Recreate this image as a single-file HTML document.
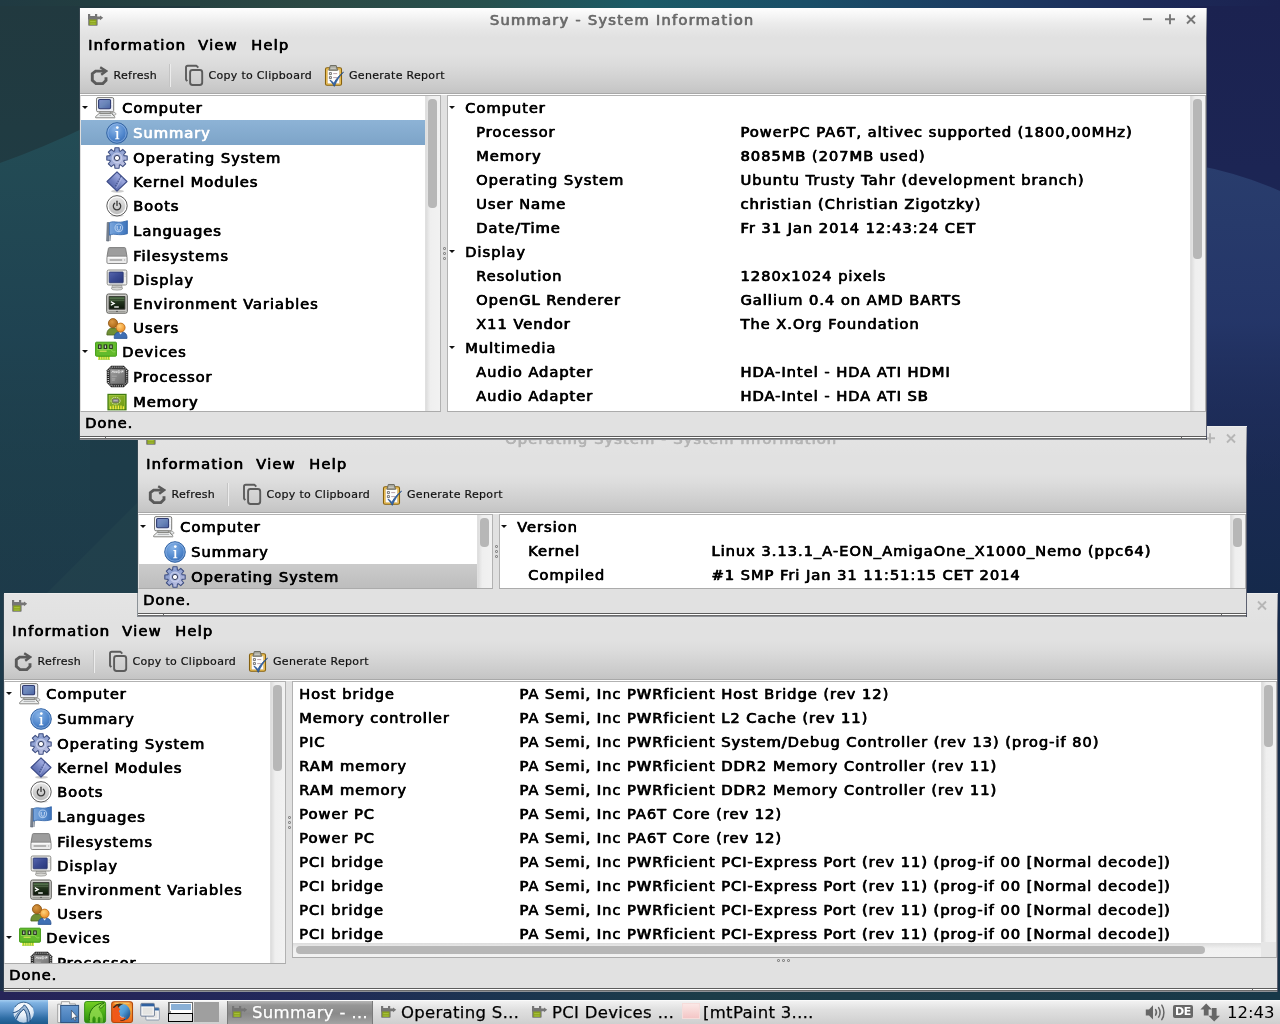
<!DOCTYPE html><html><head><meta charset="utf-8"><title>System Information</title><style>
*{box-sizing:border-box;margin:0;padding:0}
html,body{width:1280px;height:1024px;overflow:hidden}
body{position:relative;font-family:'DejaVu Sans','Liberation Sans',sans-serif;font-size:14.67px;color:#000;background:#1d3448;-webkit-font-smoothing:antialiased}
.abs{position:absolute}
#wall{position:absolute;left:0;top:0;width:1280px;height:1024px}
.win{position:absolute;background:#e1e1e1;overflow:hidden;will-change:transform;border-radius:.01px;box-shadow:-1px 0 0 rgba(70,80,90,.55)}
.inactive{box-shadow:0 -1px 0 #ececec,-1px 0 0 rgba(70,80,90,.55)}
.chrome{position:absolute;left:0;top:0;right:0;height:85px;background:linear-gradient(#fefefe 0px,#f6f6f6 7px,#ececec 15px,#e5e5e5 23px,#e1e1e1 30px,#e1e1e1 46px,#dcdcdc 56px,#d3d3d3 68px,#cacaca 79px,#c4c4c4 85px)}
.inactive .chrome{background:linear-gradient(#e4e4e4 0px,#e2e2e2 23px,#e1e1e1 30px,#e1e1e1 46px,#dcdcdc 56px,#d3d3d3 68px,#cacaca 79px,#c4c4c4 85px)}
.tline{position:absolute;left:0;right:0;top:85px;height:1px;background:#a8a8a8}
.wline{position:absolute;left:0;right:0;top:86px;height:1px;background:#fff}
.b{letter-spacing:.97px;text-shadow:.6px 0 0 currentColor;-webkit-text-stroke:.42px currentColor;white-space:pre}
.title{position:absolute;left:27px;right:70px;top:0px;height:23px;line-height:23px;text-align:center;color:#6c6c6c;font-size:14.67px;letter-spacing:1.25px!important}
.inactive .title{color:#b4b4b4}
.menu{position:absolute;top:27px;height:20px;line-height:20px;font-size:14.67px;letter-spacing:1.2px!important}
.tb{position:absolute;top:59px;height:18px;line-height:18px;font-size:11px;letter-spacing:.3px;color:#111;white-space:pre;-webkit-text-stroke:.2px #111}
.pane{position:absolute;background:#fff;border:1px solid #b2b2b2;border-bottom-color:#ababab;overflow:hidden}
.row{position:absolute;left:0;height:24px;line-height:24px;font-size:14.67px}
.sel{position:absolute;left:0;background:linear-gradient(#8db3d6,#7da4c8)}
.selg{position:absolute;left:0;background:linear-gradient(#cbcbcb,#bdbdbd)}
.sbv{position:absolute;top:0;bottom:0;width:15px;background:linear-gradient(90deg,#dcdcdc,#efefef 30%,#f2f2f2);border-left:1px solid #e0e0e0}
.thumb{position:absolute;background:#b7b7b7;border-radius:4px}
.status{position:absolute;left:0;right:0;height:22px;line-height:22px;font-size:14.67px}
.bb{position:absolute;left:0;right:0;bottom:0;height:4px;background:linear-gradient(#5c5c5c 0,#5c5c5c 1px,#fff 1px,#fff 2px,#6a6a6a 2px,#6a6a6a 3px,#8d9096 3px,#8d9096 4px)}
.dot{position:absolute;width:2px;height:2px;border:1px solid #8a8a8a;border-radius:1px;box-sizing:content-box;width:1px;height:1px}
svg{position:absolute;overflow:visible}
.arrow{position:absolute;width:0;height:0;border-left:3px solid transparent;border-right:3px solid transparent;border-top:3.5px solid #111}
#panel{position:absolute;left:0;top:1000px;width:1280px;height:24px;will-change:transform;border-radius:.01px;overflow:hidden;background:linear-gradient(#f4f4f4,#e0e0e0 40%,#cfcfcf)}
.task{position:absolute;top:1px;height:24px;line-height:24px;font-size:16.5px;letter-spacing:.3px;white-space:pre;color:#000;-webkit-text-stroke:.25px currentColor}
</style></head><body>
<svg id="wall" viewBox="0 0 1280 1024" preserveAspectRatio="none">
<defs>
<linearGradient id="wt" x1="0" y1="0" x2="1" y2="0"><stop offset="0" stop-color="#203a42"/><stop offset=".07" stop-color="#223d40"/><stop offset=".24" stop-color="#2c4944"/><stop offset=".38" stop-color="#27504e"/><stop offset=".5" stop-color="#1b5a66"/><stop offset=".63" stop-color="#1a4f68"/><stop offset=".78" stop-color="#1c3a62"/><stop offset=".9" stop-color="#1c2a58"/><stop offset="1" stop-color="#1b2250"/></linearGradient>
<linearGradient id="wl" x1="0" y1="0" x2="0" y2="1"><stop offset="0" stop-color="#21393f"/><stop offset=".12" stop-color="#203b42"/><stop offset=".45" stop-color="#1d3c49"/><stop offset=".6" stop-color="#1d3a4a"/><stop offset=".9" stop-color="#1c364a"/><stop offset=".97" stop-color="#1d3049"/><stop offset="1" stop-color="#252458"/></linearGradient>
<linearGradient id="wl2" x1="0" y1="0" x2="0" y2="1"><stop offset="0" stop-color="#234c55"/><stop offset=".45" stop-color="#1f4352" stop-opacity=".95"/><stop offset="1" stop-color="#1d3e4a" stop-opacity="0"/></linearGradient>
<linearGradient id="wr" x1="0" y1="0" x2="0" y2="1"><stop offset="0" stop-color="#1b2250"/><stop offset=".16" stop-color="#1c2554"/><stop offset=".42" stop-color="#1b2a54"/><stop offset=".6" stop-color="#14294a"/><stop offset="1" stop-color="#183448"/></linearGradient>
<linearGradient id="wr2" x1="0" y1="0" x2="0" y2="1"><stop offset="0" stop-color="#293d6d"/><stop offset=".5" stop-color="#25376a" stop-opacity=".9"/><stop offset="1" stop-color="#1e2d5a" stop-opacity="0"/></linearGradient>
<linearGradient id="wb" x1="0" y1="0" x2="1" y2="0"><stop offset="0" stop-color="#262458"/><stop offset=".22" stop-color="#22285a"/><stop offset=".38" stop-color="#1c3450"/><stop offset=".55" stop-color="#1c3c48"/><stop offset="1" stop-color="#183848"/></linearGradient>
</defs>
<rect width="1280" height="1024" fill="url(#wt)"/>
<rect x="0" y="6" width="200" height="1018" fill="url(#wl)"/>
<path d="M0 163Q45 147 90 125V600H0z" fill="url(#wl2)"/>
<path d="M40 600L140 500V600z" fill="#2c4a50" opacity=".35"/>
<rect x="1190" y="6" width="90" height="1018" fill="url(#wr)"/>
<path d="M1190 164Q1240 173 1280 191V480H1190z" fill="url(#wr2)"/>
<rect x="0" y="991" width="1280" height="33" fill="url(#wb)"/>
</svg>
<svg width="0" height="0" style="position:absolute;left:-10px;top:-10px"><defs><symbol id="i-app" viewBox="0 0 16 13"><path d="M0 0h2.200v2h4.800V0h2.200v2.400h2.800V1.400L15.200 3.800 12 6.200V5.200H9.600v5.600c0 .6-.4 1-1 1H1.200c-.6 0-1-.4-1-1V5.400H0z" fill="#757575"/>
<path d="M1.300 5.400h7.200v5.200c0 .3-.2.500-.5.500H1.800c-.3 0-.5-.2-.5-.5z" fill="#8aa31c"/>
<path d="M2.200 7h5.400v1.200H2.200z" fill="#a6bf3a"/><path d="M2.200 9.400h5.400v1.100H2.200z" fill="#a3bd44"/></symbol><symbol id="i-refresh" viewBox="0 0 18 19"><path d="M16 11.300V14.500L12.800 17.600H6L2.300 14.400V7.700L5.600 5.100H14.600" fill="none" stroke="#5a5a5a" stroke-width="2.900" stroke-linejoin="miter"/>
<path d="M10.200 1.300L16.200 5 11.200 8.800" fill="none" stroke="#5a5a5a" stroke-width="2.400" stroke-linejoin="miter"/></symbol><symbol id="i-copy" viewBox="0 0 19 22"><path d="M2.300 17.200L1 15.600V3.400Q1 1.700 2.700 1.700H11.300L13.300 3.700" fill="none" stroke="#5c5c5c" stroke-width="1.900" stroke-linejoin="round"/>
<rect x="5.100" y="6" width="12.100" height="15" rx="2.400" fill="none" stroke="#5c5c5c" stroke-width="1.900"/></symbol><symbol id="i-report" viewBox="0 0 21 23"><rect x="2.500" y="3.700" width="16" height="17.500" rx="1.500" fill="#eec257" stroke="#85600f" stroke-width="1.100"/>
<rect x="4.300" y="5.900" width="12.400" height="13.900" fill="#fdfdfd" stroke="#c9a04a" stroke-width=".5"/>
<path d="M5.900 6.300L7.300 1.500h5.900l1.400 4.800z" fill="#a5a59b" stroke="#66665c" stroke-width=".9" stroke-linejoin="round"/>
<path d="M7.600 4.200h5.200" stroke="#d6d6cf" stroke-width="1"/>
<path d="M6.400 8.600h2v2h-2zM6.400 12.600h2v2h-2z" fill="#fff" stroke="#666" stroke-width=".9"/>
<path d="M10.200 9.600h4M10.200 13.600h4" stroke="#b9a0a8" stroke-width="1"/>
<path d="M6.900 16.200c1.400.5 2.700 1.400 3.900 3.100C13.200 14.800 16.500 11 20.600 8c-3.900 4-6.900 8.600-9.300 14.400-1.200-2.400-2.700-4.300-4.400-6.200z" fill="#3b6db0" stroke="#204a87" stroke-width=".7" stroke-linejoin="round"/></symbol><symbol id="i-computer" viewBox="0 0 22 22"><defs><linearGradient id="gsc" x1="0" y1="0" x2="1" y2="1"><stop offset="0" stop-color="#8090cc"/><stop offset=".5" stop-color="#6a86b8"/><stop offset="1" stop-color="#4a62a4"/></linearGradient></defs>
<path d="M16.600 15.200c1.800-.6 3.600 0 4.200 1.400.4 1-.6 1.600-2.400 1.800z" fill="#e4e6e8" stroke="#8a8a86" stroke-width=".8"/>
<rect x="1.500" y=".6" width="17.200" height="14.200" rx="1.500" fill="#eef0f6" stroke="#7b7b77" stroke-width="1"/>
<rect x="3.600" y="2.500" width="12" height="9.200" rx="1.200" fill="url(#gsc)" stroke="#2f3b72" stroke-width="1.100"/>
<path d="M16.600 4.400h1.300M16.600 5.900h1.300M16.600 7.400h1.300" stroke="#fff" stroke-width=".8"/>
<path d="M4.800 14.800h10.600v1.600H4.800z" fill="#dfe1e4" stroke="#7b7b77" stroke-width=".8"/>
<path d="M4.200 16.400h12.200l3.400 3.300c.5.500.2 1.100-.5 1.100H1c-.7 0-1-.6-.5-1.100z" fill="#eceeee" stroke="#7b7b77" stroke-width=".9" stroke-linejoin="round"/>
<path d="M5 17.700h10.600l.8 1.300H4.200z" fill="#b4b6b8"/></symbol><symbol id="i-info" viewBox="0 0 22 22"><defs><radialGradient id="gin" cx=".4" cy=".3" r=".8"><stop offset="0" stop-color="#86b2e6"/><stop offset=".6" stop-color="#4f86cc"/><stop offset="1" stop-color="#3366ad"/></radialGradient></defs>
<circle cx="11" cy="11" r="10.300" fill="url(#gin)" stroke="#3465a4" stroke-width="1"/>
<circle cx="11" cy="11" r="9.200" fill="none" stroke="#a9c8ee" stroke-width=".8" opacity=".7"/>
<circle cx="11.300" cy="5.600" r="1.350" fill="#fff"/>
<path d="M9.300 9h2.900v7.300l1.200.3v.7H9.100v-.7l1.300-.3v-6.300l-1.100-.3z" fill="#fff"/></symbol><symbol id="i-gear" viewBox="0 0 22 22"><defs><linearGradient id="gge" x1="0" y1="0" x2=".6" y2="1"><stop offset="0" stop-color="#b9c6e6"/><stop offset=".35" stop-color="#8a9ed0"/><stop offset=".7" stop-color="#a3aed8"/><stop offset="1" stop-color="#c3c6e4"/></linearGradient></defs>
<path d="M8.60 4.00 L8.93 0.81 L13.07 0.81 L13.40 4.00 L14.25 4.35 L16.75 2.33 L19.67 5.25 L17.65 7.75 L18.00 8.60 L21.19 8.93 L21.19 13.07 L18.00 13.40 L17.65 14.25 L19.67 16.75 L16.75 19.67 L14.25 17.65 L13.40 18.00 L13.07 21.19 L8.93 21.19 L8.60 18.00 L7.75 17.65 L5.25 19.67 L2.33 16.75 L4.35 14.25 L4.00 13.40 L0.81 13.07 L0.81 8.93 L4.00 8.60 L4.35 7.75 L2.33 5.25 L5.25 2.33 L7.75 4.35Z" fill="url(#gge)" stroke="#3f4f82" stroke-width="1.100" stroke-linejoin="round"/>
<circle cx="11" cy="11" r="4.600" fill="none" stroke="#ccd2ec" stroke-width="1.600" opacity=".8"/>
<circle cx="11" cy="11" r="2.600" fill="#fff" stroke="#39425f" stroke-width="1"/></symbol><symbol id="i-module" viewBox="0 0 22 22"><defs><linearGradient id="gmo" x1="1" y1="0" x2="0" y2="1"><stop offset="0" stop-color="#7a88c4"/><stop offset=".35" stop-color="#9aa6dc"/><stop offset=".6" stop-color="#6c7cbc"/><stop offset="1" stop-color="#44549a"/></linearGradient></defs>
<ellipse cx="11.500" cy="20.200" rx="6.500" ry="1.500" fill="#000" opacity=".2"/>
<path d="M11 .8L21 10.500 11 20.200 1 10.500z" fill="url(#gmo)" stroke="#3b4a86" stroke-width="1.100" stroke-linejoin="round"/>
<path d="M14.800 5.200l-5.600 10.600" stroke="#39467e" stroke-width="1.200" stroke-dasharray="1.400 1.100" opacity=".85"/>
<path d="M16 6.400l-5.600 10.600" stroke="#c9d0f0" stroke-width=".8" opacity=".6"/></symbol><symbol id="i-power" viewBox="0 0 22 22"><defs><linearGradient id="gpw" x1="0" y1="0" x2="0" y2="1"><stop offset="0" stop-color="#e4e4e4"/><stop offset="1" stop-color="#bdbdbd"/></linearGradient></defs>
<ellipse cx="11" cy="20.600" rx="7" ry="1.300" fill="#000" opacity=".12"/>
<circle cx="11" cy="10.800" r="10.200" fill="#fbfbfb" stroke="#5c5c5c" stroke-width="1"/>
<circle cx="11" cy="10.800" r="8.400" fill="url(#gpw)"/>
<path d="M8.700 8.300a3.700 3.700 0 1 0 4.600 0" fill="none" stroke="#3a3a3a" stroke-width="1.300" stroke-linecap="round"/>
<path d="M11 6.200v4.200" stroke="#3a3a3a" stroke-width="1.300" stroke-linecap="round"/></symbol><symbol id="i-flag" viewBox="0 0 22 22"><defs><linearGradient id="gfl" x1="0" y1="0" x2="1" y2="0"><stop offset="0" stop-color="#7ba6dc"/><stop offset=".5" stop-color="#5a8fd0"/><stop offset="1" stop-color="#3d73ba"/></linearGradient></defs>
<path d="M1.200 2.500h1.900V21H.6z" fill="#7d8794" stroke="#59626e" stroke-width=".6"/>
<path d="M3.800 14.500h1.400L4.600 21H3.800z" fill="#8c96a2"/>
<path d="M3.400 2.600c3-1.400 5.600-.6 8.800-.4 3.100.2 6.300-.6 9.200-1.500v13c-3 .8-6.100 1.200-9.200.9-3.100-.3-5.800-.9-8.800.6z" fill="url(#gfl)" stroke="#2f62a6" stroke-width=".8"/>
<circle cx="12.800" cy="7.800" r="3.800" fill="none" stroke="#b7d1f2" stroke-width="1.200" opacity=".85"/>
<path d="M11.200 6v2.600c0 1 .7 1.600 1.600 1.600s1.600-.6 1.600-1.600V6" fill="none" stroke="#cfe0f7" stroke-width="1" opacity=".9"/></symbol><symbol id="i-drive" viewBox="0 1 22 22"><path d="M3.600 3.600h14.800c.7 0 1.100.3 1.200.9l1.400 8.100H1l1.400-8.100c.1-.6.500-.9 1.200-.9z" fill="#9d9d9d" stroke="#777" stroke-width=".9" stroke-linejoin="round"/>
<rect x=".9" y="12.200" width="20.200" height="7.300" rx="1.300" fill="#ececec" stroke="#808080" stroke-width=".9"/>
<path d="M2 13.300h18" stroke="#fff" stroke-width=".9"/>
<rect x="3.600" y="15.400" width="12.600" height="1.200" fill="#8c8c8c"/>
<circle cx="18.600" cy="16" r=".8" fill="#b5b5b5"/></symbol><symbol id="i-display" viewBox="0 0 22 22"><defs><linearGradient id="gds" x1="0" y1="0" x2="1" y2="1"><stop offset="0" stop-color="#5666ae"/><stop offset=".5" stop-color="#3a4a92"/><stop offset="1" stop-color="#29377a"/></linearGradient></defs>
<path d="M6.500 16h9l.8 3.200H5.700z" fill="#cfcfcc" stroke="#8e8e8a" stroke-width=".7"/>
<ellipse cx="11" cy="19.600" rx="5.600" ry="1.500" fill="#d9d9d6" stroke="#8e8e8a" stroke-width=".7"/>
<rect x="1.200" y="1" width="19.600" height="15" rx="1.400" fill="#eeeeec" stroke="#8a8a86" stroke-width="1"/>
<rect x="3.200" y="3" width="14" height="10.800" rx=".6" fill="url(#gds)" stroke="#27336a" stroke-width=".8"/>
<path d="M18.600 4.200h1M18.600 5.800h1M18.600 7.400h1" stroke="#aaa" stroke-width=".7"/></symbol><symbol id="i-term" viewBox="0 0 22 22"><defs><linearGradient id="gtm" x1="0" y1="0" x2="0" y2="1"><stop offset="0" stop-color="#4a6a44"/><stop offset=".35" stop-color="#25391f"/><stop offset="1" stop-color="#0c160a"/></linearGradient></defs>
<rect x=".7" y="1" width="20.600" height="19.200" rx="1.800" fill="#cfcfcb" stroke="#5d5d59" stroke-width="1"/>
<rect x="2.600" y="2.900" width="16.800" height="13.800" rx=".8" fill="#3c3c38"/>
<rect x="3.600" y="3.900" width="14.800" height="11.800" fill="url(#gtm)"/>
<path d="M3.600 5.600h14.800M3.600 7.600h14.800" stroke="#7f9a74" stroke-width=".7" opacity=".55"/>
<path d="M4.800 8.600l3.400 1.800-3.400 1.800" fill="none" stroke="#fff" stroke-width="1.200"/>
<path d="M8.200 14h4.600" stroke="#fff" stroke-width="1.300"/>
<path d="M2.400 18.400h17.200" stroke="#8e8e8a" stroke-width=".9"/>
<path d="M10 18.400h2" stroke="#555" stroke-width=".9"/></symbol><symbol id="i-users" viewBox="0 0 22 22"><defs><radialGradient id="gu1" cx=".4" cy=".35" r=".7"><stop offset="0" stop-color="#dc9a44"/><stop offset="1" stop-color="#a86414"/></radialGradient>
<radialGradient id="gu2" cx=".4" cy=".35" r=".7"><stop offset="0" stop-color="#ffd27a"/><stop offset="1" stop-color="#ec8a22"/></radialGradient></defs>
<path d="M.9 17.200c0-3.600 2-6.200 6.200-6.200s6.200 2.600 6.200 6.200v.8H.9z" fill="#6f8f34" stroke="#4a6620" stroke-width=".8"/>
<circle cx="7" cy="6.200" r="4.600" fill="url(#gu1)" stroke="#8a5210" stroke-width=".8"/>
<path d="M8.200 20.800c0-3.800 2-6 6.400-6s6.400 2.200 6.400 6v.6H8.200z" fill="#3f6fb4" stroke="#27508e" stroke-width=".8"/>
<path d="M12.800 15.200l1.800 2.200 1.800-2.200z" fill="#eef2fa"/>
<circle cx="14.600" cy="10.600" r="4.500" fill="url(#gu2)" stroke="#b8660e" stroke-width=".8"/></symbol><symbol id="i-devices" viewBox="0 1.2 22 22"><path d="M3 16h12v4H3z" fill="#7fc431"/>
<path d="M3.600 16.400v3.400M5.400 16.400v3.400M7.200 16.400v3.400M9 16.400v3.400M10.800 16.400v3.400M12.600 16.400v3.400M14.400 16.400v3.400" stroke="#f4ee5a" stroke-width="1"/>
<rect x=".6" y="2.400" width="20.800" height="14" rx=".8" fill="#63bb2c" stroke="#3f9a14" stroke-width="1"/>
<path d="M2 9.600h13.600l2.600 2.400h2.200" fill="none" stroke="#9bdc5e" stroke-width=".8"/>
<rect x="3" y="4.600" width="3.600" height="4.600" fill="#2c3a24"/><rect x="8.600" y="4.600" width="3.600" height="4.600" fill="#2c3a24"/><rect x="14.200" y="4.600" width="3.600" height="4.600" fill="#2c3a24"/>
<rect x="4.200" y="5.600" width="1.200" height="2.600" fill="#c9d2c2"/><rect x="9.800" y="5.600" width="1.200" height="2.600" fill="#c9d2c2"/><rect x="15.400" y="5.600" width="1.200" height="2.600" fill="#c9d2c2"/>
<path d="M4.600 11.400h7" stroke="#d8e25a" stroke-width="1.200"/></symbol><symbol id="i-cpu" viewBox="0 0 23 23"><path d="M5.200 .8h12.600l4.400 4.400v12.600l-4.400 4.400H5.200L.8 17.800V5.200z" fill="#1e1e1e"/><path d="M5.800 2.200h11.400l3.600 3.600v11.400l-3.600 3.600H5.800l-3.600-3.600V5.800z" fill="none" stroke="#e8e8e8" stroke-width="1.300" stroke-dasharray=".9 1.050"/><defs><linearGradient id="gcp" x1="0" y1="0" x2="1" y2="1"><stop offset="0" stop-color="#a2a2a2"/><stop offset=".5" stop-color="#858585"/><stop offset="1" stop-color="#6a6a6a"/></linearGradient></defs><rect x="3.800" y="3.800" width="15.400" height="15.400" rx=".8" fill="url(#gcp)" stroke="#444" stroke-width=".8"/><path d="M5.600 7.800l1.400-2 1 2M8.800 5.800v2l1-1.200 1 1.200v-2M12 5.800h1.200c.7 0 1 .4 1 1s-.3 1-1 1H12z" fill="none" stroke="#e6e6e6" stroke-width=".8"/><path d="M15.400 5.600h2v2l-.8-.6-1.200 1.200z" fill="#e6e6e6"/><path d="M5.800 11.200h5M5.800 13.800h3.600M5.800 15.200h3" stroke="#b4b4b4" stroke-width=".7"/></symbol><symbol id="i-mem" viewBox="0 0 22 22"><defs><linearGradient id="gme" x1="0" y1="0" x2="1" y2="1"><stop offset="0" stop-color="#92bb2c"/><stop offset="1" stop-color="#6c9716"/></linearGradient></defs>
<rect x="2" y="3.400" width="18" height="15.400" fill="url(#gme)" stroke="#3f7a10" stroke-width="1.200"/>
<rect x="3.200" y="4.600" width="15.600" height="13" fill="none" stroke="#b4d65a" stroke-width=".6" opacity=".7"/>
<path d="M4.600 18.200v-3M7.200 18.200v-3.600M9.800 18.200v-3.600M12.400 18.200v-3.600M15 18.200v-3.600M17.400 18.200v-3" stroke="#f4ec3c" stroke-width="1.300"/>
<ellipse cx="9.600" cy="9.800" rx="4.600" ry="3.400" fill="none" stroke="#f2f2e6" stroke-width="1" stroke-dasharray=".9 .9"/>
<rect x="6.600" y="8" width="6" height="3.600" rx=".8" fill="#8f8f8f" stroke="#5f5f5f" stroke-width=".6"/>
<path d="M7.600 9.400h4" stroke="#c9c9c9" stroke-width=".7"/></symbol></defs></svg>
<div class="win inactive" style="left:4px;top:594px;width:1274px;height:398px">
<div class="chrome"></div><div class="tline"></div><div class="wline"></div>
<svg style="left:8px;top:6px" width="16" height="13"><use href="#i-app"/></svg>
<div class="title b">PCI Devices - System Information</div>
<svg style="left:0;top:0" width="1274" height="24"><path d="M1254 7.5l8 8m0-8l-8 8" stroke="#b6b6b6" stroke-width="1.9" fill="none"/></svg>
<div class="menu b" style="left:8px">Information</div>
<div class="menu b" style="left:118px">View</div>
<div class="menu b" style="left:171px">Help</div>
<svg style="left:10px;top:58px" width="18" height="19"><use href="#i-refresh"/></svg>
<div class="tb" style="left:33.5px">Refresh</div>
<div class="abs" style="left:90px;top:56px;width:1px;height:23px;background:#ececec"></div>
<div class="abs" style="left:89px;top:56px;width:1px;height:23px;background:#c4c4c4"></div>
<svg style="left:105px;top:56px" width="19" height="22"><use href="#i-copy"/></svg>
<div class="tb" style="left:128.5px">Copy to Clipboard</div>
<svg style="left:243px;top:56px" width="21" height="23"><use href="#i-report"/></svg>
<div class="tb" style="left:269px">Generate Report</div>
<div class="pane" style="left:0;top:87px;width:282px;height:283px;border-left-color:#dedede">
<div class="arrow" style="left:0.5px;top:10px"></div>
<svg style="left:14px;top:1px" width="22" height="22"><use href="#i-computer"/></svg>
<div class="row b " style="left:41px;top:0px;height:24px;line-height:24px;">Computer</div>
<svg style="left:25px;top:25.5px" width="22" height="22"><use href="#i-info"/></svg>
<div class="row b " style="left:52px;top:24px;height:25px;line-height:25px;">Summary</div>
<svg style="left:25px;top:50.5px" width="22" height="22"><use href="#i-gear"/></svg>
<div class="row b " style="left:52px;top:49px;height:25px;line-height:25px;">Operating System</div>
<svg style="left:25px;top:75px" width="22" height="22"><use href="#i-module"/></svg>
<div class="row b " style="left:52px;top:74px;height:24px;line-height:24px;">Kernel Modules</div>
<svg style="left:25px;top:99px" width="22" height="22"><use href="#i-power"/></svg>
<div class="row b " style="left:52px;top:98px;height:24px;line-height:24px;">Boots</div>
<svg style="left:25px;top:123.5px" width="22" height="22"><use href="#i-flag"/></svg>
<div class="row b " style="left:52px;top:122px;height:25px;line-height:25px;">Languages</div>
<svg style="left:25px;top:148.5px" width="22" height="22"><use href="#i-drive"/></svg>
<div class="row b " style="left:52px;top:147px;height:25px;line-height:25px;">Filesystems</div>
<svg style="left:25px;top:173px" width="22" height="22"><use href="#i-display"/></svg>
<div class="row b " style="left:52px;top:172px;height:24px;line-height:24px;">Display</div>
<svg style="left:25px;top:197px" width="22" height="22"><use href="#i-term"/></svg>
<div class="row b " style="left:52px;top:196px;height:24px;line-height:24px;">Environment Variables</div>
<svg style="left:25px;top:221px" width="22" height="22"><use href="#i-users"/></svg>
<div class="row b " style="left:52px;top:220px;height:24px;line-height:24px;">Users</div>
<div class="arrow" style="left:0.5px;top:254px"></div>
<svg style="left:14px;top:245px" width="22" height="22"><use href="#i-devices"/></svg>
<div class="row b " style="left:41px;top:244px;height:24px;line-height:24px;">Devices</div>
<svg style="left:24.5px;top:269px" width="23" height="23"><use href="#i-cpu"/></svg>
<div class="row b " style="left:52px;top:268px;height:25px;line-height:25px;">Processor</div>
<div class="sbv" style="right:0"><div class="thumb" style="left:2.4px;width:8.4px;top:3px;height:86px"></div></div>
</div>
<div class="dot" style="left:284px;top:222px"></div>
<div class="dot" style="left:284px;top:227px"></div>
<div class="dot" style="left:284px;top:232px"></div>
<div class="pane" style="left:288px;top:87px;width:985px;height:277px">
<div class="row b " style="left:6px;top:0px;height:24px;line-height:24px;">Host bridge</div>
<div class="row b " style="left:226.3px;top:0px;height:24px;line-height:24px;">PA Semi, Inc PWRficient Host Bridge (rev 12)</div>
<div class="row b " style="left:6px;top:24px;height:24px;line-height:24px;">Memory controller</div>
<div class="row b " style="left:226.3px;top:24px;height:24px;line-height:24px;">PA Semi, Inc PWRficient L2 Cache (rev 11)</div>
<div class="row b " style="left:6px;top:48px;height:24px;line-height:24px;">PIC</div>
<div class="row b " style="left:226.3px;top:48px;height:24px;line-height:24px;">PA Semi, Inc PWRficient System/Debug Controller (rev 13) (prog-if 80)</div>
<div class="row b " style="left:6px;top:72px;height:24px;line-height:24px;">RAM memory</div>
<div class="row b " style="left:226.3px;top:72px;height:24px;line-height:24px;">PA Semi, Inc PWRficient DDR2 Memory Controller (rev 11)</div>
<div class="row b " style="left:6px;top:96px;height:24px;line-height:24px;">RAM memory</div>
<div class="row b " style="left:226.3px;top:96px;height:24px;line-height:24px;">PA Semi, Inc PWRficient DDR2 Memory Controller (rev 11)</div>
<div class="row b " style="left:6px;top:120px;height:24px;line-height:24px;">Power PC</div>
<div class="row b " style="left:226.3px;top:120px;height:24px;line-height:24px;">PA Semi, Inc PA6T Core (rev 12)</div>
<div class="row b " style="left:6px;top:144px;height:24px;line-height:24px;">Power PC</div>
<div class="row b " style="left:226.3px;top:144px;height:24px;line-height:24px;">PA Semi, Inc PA6T Core (rev 12)</div>
<div class="row b " style="left:6px;top:168px;height:24px;line-height:24px;">PCI bridge</div>
<div class="row b " style="left:226.3px;top:168px;height:24px;line-height:24px;">PA Semi, Inc PWRficient PCI-Express Port (rev 11) (prog-if 00 [Normal decode])</div>
<div class="row b " style="left:6px;top:192px;height:24px;line-height:24px;">PCI bridge</div>
<div class="row b " style="left:226.3px;top:192px;height:24px;line-height:24px;">PA Semi, Inc PWRficient PCI-Express Port (rev 11) (prog-if 00 [Normal decode])</div>
<div class="row b " style="left:6px;top:216px;height:24px;line-height:24px;">PCI bridge</div>
<div class="row b " style="left:226.3px;top:216px;height:24px;line-height:24px;">PA Semi, Inc PWRficient PCI-Express Port (rev 11) (prog-if 00 [Normal decode])</div>
<div class="row b " style="left:6px;top:240px;height:24px;line-height:24px;">PCI bridge</div>
<div class="row b " style="left:226.3px;top:240px;height:24px;line-height:24px;">PA Semi, Inc PWRficient PCI-Express Port (rev 11) (prog-if 00 [Normal decode])</div>
<div class="sbv" style="right:0;bottom:15px"><div class="thumb" style="left:2.4px;width:8.4px;top:3px;height:62px"></div></div>
<div class="abs" style="left:0;right:15px;bottom:0;height:14px;background:linear-gradient(#dcdcdc,#f0f0f0 40%,#f2f2f2)"><div class="thumb" style="left:3px;top:3px;height:8px;width:909px"></div></div>
<div class="abs" style="right:0;bottom:0;width:15px;height:15px;background:#e6e6e6"></div>
</div>
<div class="dot" style="left:773px;top:365px"></div>
<div class="dot" style="left:778px;top:365px"></div>
<div class="dot" style="left:783px;top:365px"></div>
<div class="status b" style="top:370px;padding-left:5px">Done.</div>
<div class="bb"></div>
<div class="abs" style="left:25px;bottom:1px;width:1px;height:3px;background:#666"></div>
<div class="abs" style="right:25px;bottom:1px;width:1px;height:3px;background:#666"></div>
<div class="abs" style="right:0;top:0;bottom:0;width:1px;background:linear-gradient(rgba(120,125,140,.55),rgba(60,65,85,.8) 30px)"></div>
</div>
<div class="win inactive" style="left:138px;top:427px;width:1109px;height:190px">
<div class="chrome"></div><div class="tline"></div><div class="wline"></div>
<svg style="left:8px;top:6px" width="16" height="13"><use href="#i-app"/></svg>
<div class="title b" style="letter-spacing:1.1px!important">Operating System - System Information</div>
<svg style="left:0;top:0" width="1109" height="24"><path d="M1089 7.5l8 8m0-8l-8 8" stroke="#b6b6b6" stroke-width="1.9" fill="none"/><path d="M1067 11.2h10m-5-5v10" stroke="#b6b6b6" stroke-width="1.9" fill="none"/></svg>
<div class="menu b" style="left:8px">Information</div>
<div class="menu b" style="left:118px">View</div>
<div class="menu b" style="left:171px">Help</div>
<svg style="left:10px;top:58px" width="18" height="19"><use href="#i-refresh"/></svg>
<div class="tb" style="left:33.5px">Refresh</div>
<div class="abs" style="left:90px;top:56px;width:1px;height:23px;background:#ececec"></div>
<div class="abs" style="left:89px;top:56px;width:1px;height:23px;background:#c4c4c4"></div>
<svg style="left:105px;top:56px" width="19" height="22"><use href="#i-copy"/></svg>
<div class="tb" style="left:128.5px">Copy to Clipboard</div>
<svg style="left:243px;top:56px" width="21" height="23"><use href="#i-report"/></svg>
<div class="tb" style="left:269px">Generate Report</div>
<div class="pane" style="left:0;top:87px;width:355px;height:75px;border-left-color:#dedede">
<div class="arrow" style="left:0.5px;top:10px"></div>
<svg style="left:14px;top:1px" width="22" height="22"><use href="#i-computer"/></svg>
<div class="row b " style="left:41px;top:0px;height:24px;line-height:24px;">Computer</div>
<svg style="left:25px;top:25.5px" width="22" height="22"><use href="#i-info"/></svg>
<div class="row b " style="left:52px;top:24px;height:25px;line-height:25px;">Summary</div>
<div class="selg" style="top:49px;width:338px;height:25px"></div>
<svg style="left:25px;top:50.5px" width="22" height="22"><use href="#i-gear"/></svg>
<div class="row b " style="left:52px;top:49px;height:25px;line-height:25px;">Operating System</div>
<svg style="left:25px;top:75px" width="22" height="22"><use href="#i-module"/></svg>
<div class="row b " style="left:52px;top:74px;height:24px;line-height:24px;">Kernel Modules</div>
<div class="sbv" style="right:0"><div class="thumb" style="left:2.4px;width:8.4px;top:3px;height:29px"></div></div>
</div>
<div class="dot" style="left:357px;top:118px"></div>
<div class="dot" style="left:357px;top:123px"></div>
<div class="dot" style="left:357px;top:128px"></div>
<div class="pane" style="left:361px;top:87px;width:747px;height:75px">
<div class="arrow" style="left:0.5px;top:10px"></div>
<div class="row b " style="left:17px;top:0px;height:24px;line-height:24px;">Version</div>
<div class="row b " style="left:28px;top:24px;height:24px;line-height:24px;">Kernel</div>
<div class="row b " style="left:211.3px;top:24px;height:24px;line-height:24px;">Linux 3.13.1_A-EON_AmigaOne_X1000_Nemo (ppc64)</div>
<div class="row b " style="left:28px;top:48px;height:24px;line-height:24px;">Compiled</div>
<div class="row b " style="left:211.3px;top:48px;height:24px;line-height:24px;">#1 SMP Fri Jan 31 11:51:15 CET 2014</div>
<div class="sbv" style="right:0;"><div class="thumb" style="left:2.4px;width:8.4px;top:3px;height:29px"></div></div>
</div>
<div class="status b" style="top:162px;padding-left:5px">Done.</div>
<div class="bb"></div>
<div class="abs" style="left:25px;bottom:1px;width:1px;height:3px;background:#666"></div>
<div class="abs" style="right:25px;bottom:1px;width:1px;height:3px;background:#666"></div>
<div class="abs" style="right:0;top:0;bottom:0;width:1px;background:linear-gradient(rgba(120,125,140,.55),rgba(60,65,85,.8) 30px)"></div>
</div>
<div class="win" style="left:80px;top:8px;width:1127px;height:432px">
<div class="chrome"></div><div class="tline"></div><div class="wline"></div>
<svg style="left:8px;top:6px" width="16" height="13"><use href="#i-app"/></svg>
<div class="title b">Summary - System Information</div>
<svg style="left:0;top:0" width="1127" height="24"><path d="M1107 7.5l8 8m0-8l-8 8" stroke="#777" stroke-width="1.9" fill="none"/><path d="M1085 11.2h10m-5-5v10" stroke="#777" stroke-width="1.9" fill="none"/><path d="M1063 11.2h9" stroke="#777" stroke-width="1.9" fill="none"/></svg>
<div class="menu b" style="left:8px">Information</div>
<div class="menu b" style="left:118px">View</div>
<div class="menu b" style="left:171px">Help</div>
<svg style="left:10px;top:58px" width="18" height="19"><use href="#i-refresh"/></svg>
<div class="tb" style="left:33.5px">Refresh</div>
<div class="abs" style="left:90px;top:56px;width:1px;height:23px;background:#ececec"></div>
<div class="abs" style="left:89px;top:56px;width:1px;height:23px;background:#c4c4c4"></div>
<svg style="left:105px;top:56px" width="19" height="22"><use href="#i-copy"/></svg>
<div class="tb" style="left:128.5px">Copy to Clipboard</div>
<svg style="left:243px;top:56px" width="21" height="23"><use href="#i-report"/></svg>
<div class="tb" style="left:269px">Generate Report</div>
<div class="pane" style="left:0;top:87px;width:361px;height:317px;border-left-color:#dedede">
<div class="arrow" style="left:0.5px;top:10px"></div>
<svg style="left:14px;top:1px" width="22" height="22"><use href="#i-computer"/></svg>
<div class="row b " style="left:41px;top:0px;height:24px;line-height:24px;">Computer</div>
<div class="sel" style="top:24px;width:344px;height:25px"></div>
<svg style="left:25px;top:25.5px" width="22" height="22"><use href="#i-info"/></svg>
<div class="row b " style="left:52px;top:24px;height:25px;line-height:25px;color:#fff;">Summary</div>
<svg style="left:25px;top:50.5px" width="22" height="22"><use href="#i-gear"/></svg>
<div class="row b " style="left:52px;top:49px;height:25px;line-height:25px;">Operating System</div>
<svg style="left:25px;top:75px" width="22" height="22"><use href="#i-module"/></svg>
<div class="row b " style="left:52px;top:74px;height:24px;line-height:24px;">Kernel Modules</div>
<svg style="left:25px;top:99px" width="22" height="22"><use href="#i-power"/></svg>
<div class="row b " style="left:52px;top:98px;height:24px;line-height:24px;">Boots</div>
<svg style="left:25px;top:123.5px" width="22" height="22"><use href="#i-flag"/></svg>
<div class="row b " style="left:52px;top:122px;height:25px;line-height:25px;">Languages</div>
<svg style="left:25px;top:148.5px" width="22" height="22"><use href="#i-drive"/></svg>
<div class="row b " style="left:52px;top:147px;height:25px;line-height:25px;">Filesystems</div>
<svg style="left:25px;top:173px" width="22" height="22"><use href="#i-display"/></svg>
<div class="row b " style="left:52px;top:172px;height:24px;line-height:24px;">Display</div>
<svg style="left:25px;top:197px" width="22" height="22"><use href="#i-term"/></svg>
<div class="row b " style="left:52px;top:196px;height:24px;line-height:24px;">Environment Variables</div>
<svg style="left:25px;top:221px" width="22" height="22"><use href="#i-users"/></svg>
<div class="row b " style="left:52px;top:220px;height:24px;line-height:24px;">Users</div>
<div class="arrow" style="left:0.5px;top:254px"></div>
<svg style="left:14px;top:245px" width="22" height="22"><use href="#i-devices"/></svg>
<div class="row b " style="left:41px;top:244px;height:24px;line-height:24px;">Devices</div>
<svg style="left:24.5px;top:269px" width="23" height="23"><use href="#i-cpu"/></svg>
<div class="row b " style="left:52px;top:268px;height:25px;line-height:25px;">Processor</div>
<svg style="left:25px;top:294.5px" width="22" height="22"><use href="#i-mem"/></svg>
<div class="row b " style="left:52px;top:293px;height:25px;line-height:25px;">Memory</div>
<div class="sbv" style="right:0"><div class="thumb" style="left:2.4px;width:8.4px;top:3px;height:109px"></div></div>
</div>
<div class="dot" style="left:363px;top:239px"></div>
<div class="dot" style="left:363px;top:244px"></div>
<div class="dot" style="left:363px;top:249px"></div>
<div class="pane" style="left:367px;top:87px;width:759px;height:317px">
<div class="arrow" style="left:0.5px;top:10px"></div>
<div class="row b " style="left:17px;top:0px;height:24px;line-height:24px;">Computer</div>
<div class="row b " style="left:28px;top:24px;height:24px;line-height:24px;">Processor</div>
<div class="row b " style="left:292.3px;top:24px;height:24px;line-height:24px;">PowerPC PA6T, altivec supported (1800,00MHz)</div>
<div class="row b " style="left:28px;top:48px;height:24px;line-height:24px;">Memory</div>
<div class="row b " style="left:292.3px;top:48px;height:24px;line-height:24px;">8085MB (207MB used)</div>
<div class="row b " style="left:28px;top:72px;height:24px;line-height:24px;">Operating System</div>
<div class="row b " style="left:292.3px;top:72px;height:24px;line-height:24px;">Ubuntu Trusty Tahr (development branch)</div>
<div class="row b " style="left:28px;top:96px;height:24px;line-height:24px;">User Name</div>
<div class="row b " style="left:292.3px;top:96px;height:24px;line-height:24px;">christian (Christian Zigotzky)</div>
<div class="row b " style="left:28px;top:120px;height:24px;line-height:24px;">Date/Time</div>
<div class="row b " style="left:292.3px;top:120px;height:24px;line-height:24px;">Fr 31 Jan 2014 12:43:24 CET</div>
<div class="arrow" style="left:0.5px;top:154px"></div>
<div class="row b " style="left:17px;top:144px;height:24px;line-height:24px;">Display</div>
<div class="row b " style="left:28px;top:168px;height:24px;line-height:24px;">Resolution</div>
<div class="row b " style="left:292.3px;top:168px;height:24px;line-height:24px;">1280x1024 pixels</div>
<div class="row b " style="left:28px;top:192px;height:24px;line-height:24px;">OpenGL Renderer</div>
<div class="row b " style="left:292.3px;top:192px;height:24px;line-height:24px;">Gallium 0.4 on AMD BARTS</div>
<div class="row b " style="left:28px;top:216px;height:24px;line-height:24px;">X11 Vendor</div>
<div class="row b " style="left:292.3px;top:216px;height:24px;line-height:24px;">The X.Org Foundation</div>
<div class="arrow" style="left:0.5px;top:250px"></div>
<div class="row b " style="left:17px;top:240px;height:24px;line-height:24px;">Multimedia</div>
<div class="row b " style="left:28px;top:264px;height:24px;line-height:24px;">Audio Adapter</div>
<div class="row b " style="left:292.3px;top:264px;height:24px;line-height:24px;">HDA-Intel - HDA ATI HDMI</div>
<div class="row b " style="left:28px;top:288px;height:24px;line-height:24px;">Audio Adapter</div>
<div class="row b " style="left:292.3px;top:288px;height:24px;line-height:24px;">HDA-Intel - HDA ATI SB</div>
<div class="row b " style="left:28px;top:312px;height:24px;line-height:24px;"></div>
<div class="row b " style="left:292.3px;top:312px;height:24px;line-height:24px;"></div>
<div class="sbv" style="right:0;"><div class="thumb" style="left:2.4px;width:8.4px;top:3px;height:160px"></div></div>
</div>
<div class="status b" style="top:404px;padding-left:5px">Done.</div>
<div class="bb"></div>
<div class="abs" style="left:25px;bottom:1px;width:1px;height:3px;background:#666"></div>
<div class="abs" style="right:25px;bottom:1px;width:1px;height:3px;background:#666"></div>
<div class="abs" style="right:0;top:0;bottom:0;width:1px;background:linear-gradient(rgba(120,125,140,.55),rgba(60,65,85,.8) 30px)"></div>
</div>
<div id="panel">
<div class="abs" style="left:0;top:0;width:1280px;height:1px;background:#fafafa"></div>
<div class="abs" style="left:0;top:0;width:48px;height:24px;background:linear-gradient(#a4cdf0 0,#7fb2e2 12%,#5b92c8 45%,#2f6ea6 75%,#1c5a8c 100%)"></div>
<svg style="left:12px;top:1px" width="24" height="23" viewBox="0 0 24 23">
<defs><radialGradient id="glg" cx=".5" cy=".25" r=".85"><stop offset="0" stop-color="#ffffff"/><stop offset=".5" stop-color="#e6eff8"/><stop offset="1" stop-color="#9dbddc"/></radialGradient>
<clipPath id="clg"><rect x="0" y="0" width="24" height="22.500"/></clipPath></defs>
<g clip-path="url(#clg)"><circle cx="11.600" cy="11.400" r="10.300" fill="url(#glg)"/>
<path d="M2.800 6.200A10.300 10.300 0 0 1 20.600 6.400" fill="none" stroke="#1f4f80" stroke-width="1" opacity=".85"/>
<path d="M.8 11.600c3.400-.2 7.600-2.800 11.600-7.800 5 4.600 6.200 10.800 5.600 17.200h-2.600c.4-5-.6-9.600-3.400-12.600-3 2-5.400 5.600-7.400 10.600l-1.600-1c1.400-3.400 3-6.200 5-8.200-2.200 1.400-4.600 2.200-7 2.400z" fill="#5f8cbc" opacity=".6"/>
<path d="M.8 11.700c3.400-.2 7.600-2.800 11.600-7.900" fill="none" stroke="#1d4a7c" stroke-width=".9"/>
<path d="M12.400 3.800c5 4.600 6.200 10.800 5.600 17.200" fill="none" stroke="#1d4a7c" stroke-width="1"/>
<path d="M4.200 18.600c2-5 4.600-8.600 7.600-10.400 2.800 3 3.800 7.600 3.400 12.800" fill="none" stroke="#1d4a7c" stroke-width="1"/>
<path d="M2.600 17c1.600-3 3.200-5.200 5-6.800" fill="none" stroke="#2a5a8e" stroke-width=".7"/>
</g></svg>
<svg style="left:56px;top:0" width="24" height="24" viewBox="0 0 24 24">
<defs><linearGradient id="gfm" x1="0" y1="0" x2="0" y2="1"><stop offset="0" stop-color="#6a9bd2"/><stop offset="1" stop-color="#3f78b6"/></linearGradient></defs>
<path d="M1.700 22.500V4.200h3.700V1.700h8.200v2.200h5.800v18.600z" fill="#f4f4f4" stroke="#9a9a9a" stroke-width=".9" stroke-linejoin="round"/>
<rect x="4.700" y="5.400" width="17.900" height="17.200" fill="url(#gfm)" stroke="#2c507e" stroke-width="1"/>
<path d="M15.400 10.200v9.200l2-1.800 1.300 3 1.300-.6-1.300-2.900h2.600z" fill="#fafafa" stroke="#35455c" stroke-width=".7" stroke-linejoin="round"/>
</svg>
<svg style="left:84px;top:1px" width="22" height="22" viewBox="0 0 22 22">
<defs><linearGradient id="gmi" x1="0" y1="0" x2="0" y2="1"><stop offset="0" stop-color="#76cf22"/><stop offset=".5" stop-color="#4eb018"/><stop offset="1" stop-color="#2a8a0c"/></linearGradient></defs>
<rect x=".6" y=".5" width="21" height="21.200" rx="2.200" fill="url(#gmi)" stroke="#2f8a10" stroke-width=".9"/>
<path d="M20.400 1.600c-7.200.8-12.600 4.400-14.600 10.800-.8 2.800-.8 6 .2 9.200h2.600c-.4-2.600-.2-5.200.8-6 1-.8 1.800.2 1.800 1.600v4.400h2.600c0-2.400-.2-4.600.4-5.400.8-1 2-.6 2 1v4.400h2.400c.4-4.200.4-8.200-2.200-11.200-1.200-1.400-1.800-2-1.400-3 1.400.4 3 0 4.200-1.400 1.200-1.400 1.400-3 1.200-4.400z" fill="#94dc50" opacity=".8"/>
<path d="M20.400 1.600c-7.200.8-12.600 4.400-14.600 10.800-.6 2.200-.7 4.600-.3 7" fill="none" stroke="#1f6a08" stroke-width="1"/>
<path d="M20.200 2c-1.800.8-3.600 2-4.800 3.600-.6 1 .2 1.800 1.400 1.600 1.600-.4 2.800-1.800 3.400-3.600" fill="none" stroke="#1f6a08" stroke-width=".9"/>
<path d="M9.400 21.200v-4.600M11.200 21.200v-4.400M15.200 21.200v-4.600M17 21.200v-4.400" stroke="#2f8a10" stroke-width=".7"/>
</svg>
<svg style="left:111px;top:1px" width="22" height="22" viewBox="0 0 22 22">
<defs><linearGradient id="gff" x1="0" y1="1" x2=".8" y2="0"><stop offset="0" stop-color="#f04e12"/><stop offset=".5" stop-color="#f2701c"/><stop offset=".85" stop-color="#f4a83a"/><stop offset="1" stop-color="#f0903a"/></linearGradient>
<linearGradient id="ggl" x1=".2" y1="0" x2=".9" y2="1"><stop offset="0" stop-color="#69b4e6"/><stop offset=".45" stop-color="#4f9ad6"/><stop offset=".75" stop-color="#2f6aa4"/><stop offset="1" stop-color="#1f4a7c"/></linearGradient></defs>
<rect x=".7" y=".7" width="20.800" height="20.800" rx="2.400" fill="url(#gff)" stroke="#b4480a" stroke-width="1.100"/>
<path d="M4 2.200h14" stroke="#f8d070" stroke-width="1.400" opacity=".7" stroke-linecap="round"/>
<ellipse cx="13" cy="11.200" rx="6.300" ry="8" fill="url(#ggl)" transform="rotate(-12 13 11.200)"/>
<path d="M2.600 6.400C4.600 4.200 7.400 3 10 3.400 8.600 4.400 7.600 5.400 7.400 6.600c.8.400 1.600 1.200 2 2.200-.8.200-1.400.8-1.600 1.600.8.600 1.200 1.400 1.200 2.400-.4 1.200.2 2.600 1.600 3.400 1.400.8 3 .6 4.200-.2-.6 2-2.200 3.200-4.400 3.400-3.400.4-6.600-1.600-7.800-5-.8-2.400-.6-5 0-7.400z" fill="#f0581a"/>
<path d="M8.800 14.600c.8 1.400 2.400 2 4 1.600" fill="none" stroke="#f6c8b4" stroke-width="1" opacity=".8"/>
<path d="M2.800 6.200C4.600 4.200 7.200 3.200 9.800 3.400 8.600 4 7.800 4.800 7.400 5.800" fill="none" stroke="#3c2c1c" stroke-width="1.500" stroke-linecap="round"/>
<path d="M9.400 19.400c1.600.4 3.400 0 4.600-1" fill="none" stroke="#2a1c18" stroke-width="1" opacity=".75"/>
</svg>
<svg style="left:140px;top:2px" width="21" height="20" viewBox="0 0 21 20">
<rect x="5.900" y="5.700" width="13.400" height="12.300" rx=".8" fill="#fff" stroke="#8492a6" stroke-width=".9"/>
<path d="M6.300 6.100h12.600v2.400H6.300z" fill="#3468a4"/>
<rect x="7.600" y="9.400" width="10" height="7" fill="#e6e6e6"/>
<rect x=".8" y="1.400" width="13.600" height="12.700" rx=".8" fill="#fff" stroke="#5d6f8a" stroke-width=".9"/>
<path d="M1.200 1.800H14v2.600H1.200z" fill="#2f60a0"/>
<rect x="2.500" y="5.400" width="10.200" height="7.300" fill="#e4e4e2"/>
</svg>
<div class="abs" style="left:168px;top:2px;width:25px;height:20px;background:#8d8d8d;border:1px solid #6a6a6a"></div>
<div class="abs" style="left:170px;top:3px;width:22px;height:8px;background:#8ab0d6;border:1px solid #fff"></div>
<div class="abs" style="left:171px;top:11px;width:21px;height:2px;background:#fff"></div>
<div class="abs" style="left:168px;top:13px;width:25px;height:9px;background:#e2e2e2;border:1.500px solid #000"></div>
<div class="abs" style="left:194px;top:2px;width:25px;height:20px;background:#9f9f9f"></div>
<div class="abs" style="left:227px;top:1px;width:146px;height:23px;background:linear-gradient(#b6b6b6 0,#969696 18%,#8a8a8a 55%,#9a9a9a 85%,#a4a4a4);border-left:1px solid #7a7a7a;border-right:1px solid #7a7a7a"></div>
<svg style="left:232px;top:6px" width="16" height="13"><use href="#i-app"/></svg>
<div class="task" style="left:252px;color:#fff">Summary - …</div>
<svg style="left:381px;top:6px" width="16" height="13"><use href="#i-app"/></svg>
<div class="task" style="left:401px;color:#000">Operating S…</div>
<svg style="left:532px;top:6px" width="16" height="13"><use href="#i-app"/></svg>
<div class="task" style="left:552px;color:#000">PCI Devices …</div>
<div class="abs" style="left:682px;top:3px;width:18px;height:16px;background:linear-gradient(#fbe8e6,#f4c6c6);border:1px solid #f6dcda"></div>
<div class="task" style="left:703px;color:#000">[mtPaint 3.…</div>
<svg style="left:1145px;top:3px" width="22" height="19" viewBox="0 0 22 19">
<path d="M.8 6.400h3.200L8 2.200v14.400L4 12.400H.8z" fill="#666"/>
<path d="M10.600 6.600c1 1.600 1 4 0 5.600" fill="none" stroke="#666" stroke-width="1.500" stroke-linecap="round"/>
<path d="M13.600 4.600c1.800 2.800 1.800 6.800 0 9.600" fill="none" stroke="#666" stroke-width="1.500" stroke-linecap="round"/>
<path d="M16.800 2.200c2.800 4.200 2.800 10.200 0 14.400" fill="none" stroke="#666" stroke-width="1.500" stroke-linecap="round"/>
</svg>
<div class="abs" style="left:1173px;top:5px;width:20px;height:13px;background:#686868;border-radius:2px;color:#fff;font:bold 11px/13px 'DejaVu Sans','Liberation Sans',sans-serif;text-align:center;letter-spacing:-.3px">DE</div>
<svg style="left:1199px;top:3px" width="22" height="19" viewBox="0 0 22 19">
<path d="M7.200.6l5.800 5.800H9.600v6.200H4.800V6.400H1.400z" fill="#666"/>
<path d="M15.200 18.600L9.400 12.800h3.400V5h4.800v7.800H21z" fill="#666"/>
</svg>
<div class="abs" style="left:1227px;top:1px;height:24px;line-height:24px;font-size:16.500px;color:#000;white-space:pre">12:43</div>
</div>
</body></html>
